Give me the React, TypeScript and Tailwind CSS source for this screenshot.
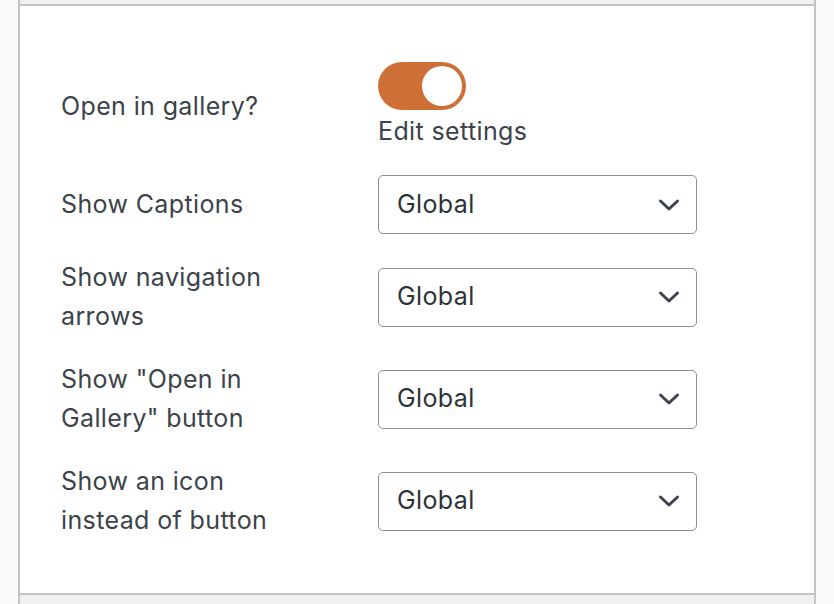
import React from "react";

function Chevron() {
  return (
    <svg width="22" height="14" viewBox="0 0 22 14" fill="none" className="shrink-0">
      <path d="M2.5 3l8.5 8 8.5-8" stroke="#3c434a" strokeWidth="3" strokeLinecap="round" strokeLinejoin="round" />
    </svg>
  );
}

function Select() {
  return (
    <div className="flex h-[59px] w-[319px] items-center justify-between rounded-[5px] border-[1.5px] border-[#8c8f94] bg-white pl-[18px] pr-[16px]">
      <span className="text-[25px] tracking-[0.015em] text-[#2c3338]">Global</span>
      <Chevron />
    </div>
  );
}

function Row({ label, children }: { label: React.ReactNode; children: React.ReactNode }) {
  return (
    <div className="grid grid-cols-[317px_1fr] items-center">
      <div className="pr-[30px] text-[25px] leading-[39px] tracking-[0.015em] text-[#3c434a]">{label}</div>
      <div>{children}</div>
    </div>
  );
}

export default function App() {
  return (
    <div
      className="flex h-[604px] w-[834px] flex-col bg-[#f8f9fa]"
      style={{ fontFamily: "Inter, 'Noto Sans', sans-serif" }}
    >
      <div className="mx-[18px] h-[4px] bg-[#f0f0f1] border-x-2 border-[#c3c4c7]" />
      <div className="mx-[18px] flex flex-col gap-[24px] border-2 border-[#c3c4c7] bg-white pb-[53px] pl-[41px] pt-[56px]">
        <Row label="Open in gallery?">
          <div className="flex flex-col items-start">
            <div className="flex h-[48px] w-[88px] items-center justify-end rounded-full bg-[#cf6f38] pr-[4px]">
              <div className="h-[40px] w-[40px] rounded-full bg-white" />
            </div>
            <div className="mt-[2px] text-[25px] leading-[39px] tracking-[0.015em] text-[#3c434a]">Edit settings</div>
          </div>
        </Row>
        <Row label="Show Captions">
          <Select />
        </Row>
        <Row label={<>Show navigation<br />arrows</>}>
          <Select />
        </Row>
        <Row label={<>Show "Open in<br />Gallery" button</>}>
          <Select />
        </Row>
        <Row label={<>Show an icon<br />instead of button</>}>
          <Select />
        </Row>
      </div>
      <div className="mx-[18px] flex-1 bg-[#f0f0f1] border-x-2 border-[#c3c4c7]" />
    </div>
  );
}
